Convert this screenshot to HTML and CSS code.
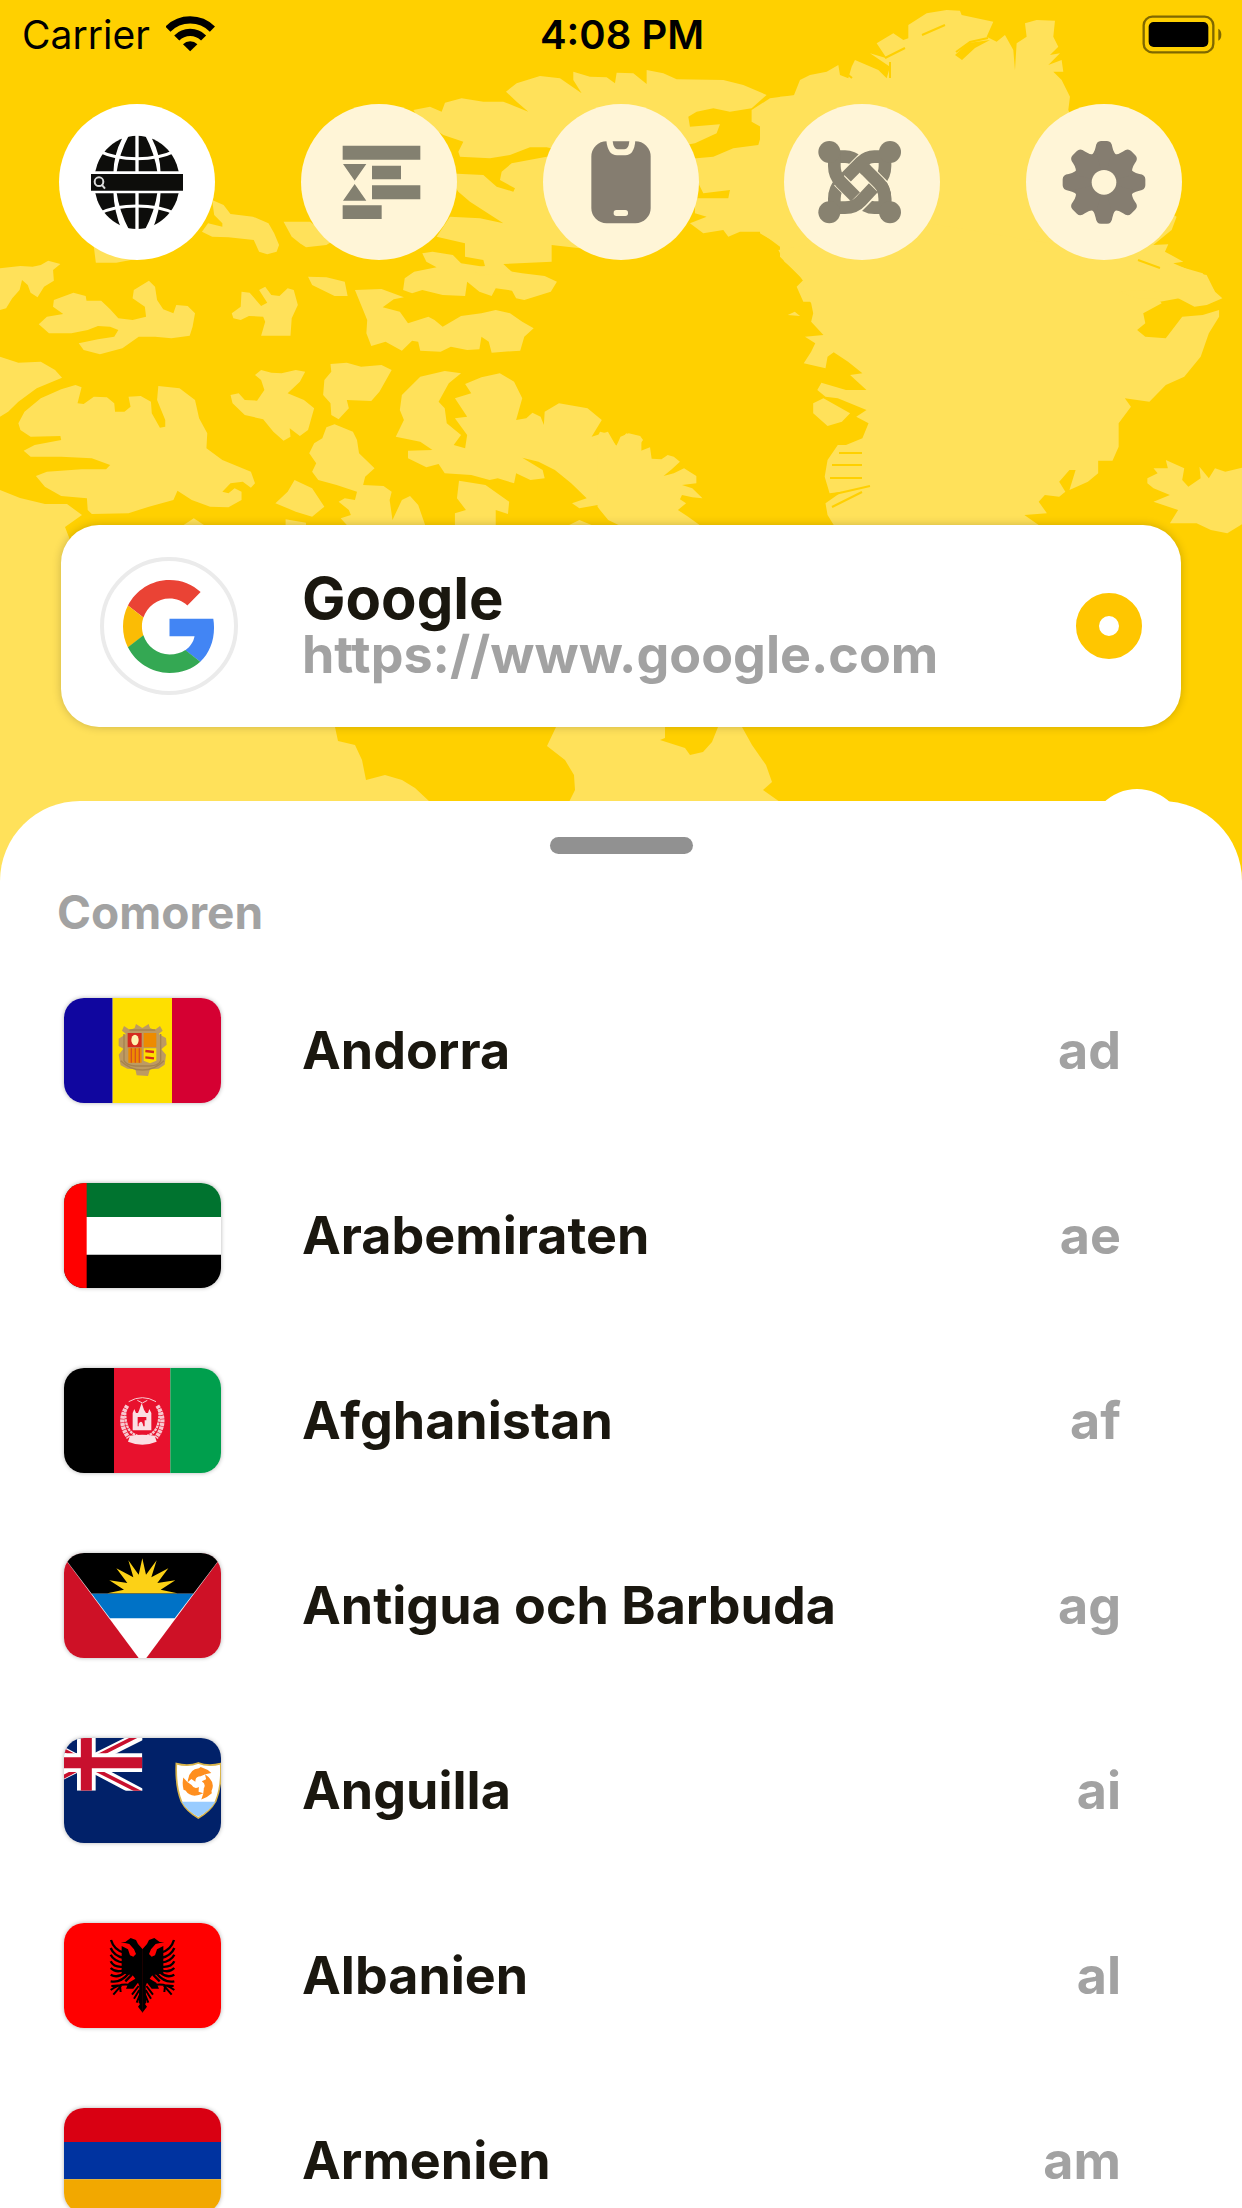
FILE: index.html
```html
<!DOCTYPE html>
<html lang="sv">
<head>
    <meta charset="UTF-8">
    <meta name="viewport" content="width=device-width, initial-scale=1">
    <title>Google</title>
    <link rel="stylesheet" href="styles.css">
</head>
<body>
<div class="app">

    <!-- Map background -->
    <svg class="map" viewBox="0 0 1242 900" aria-hidden="true">
        <g class="land">
            <!-- Canadian mainland -->
            <path d="M0 490L20 498 45 504 67 504 82 515 65 527 70 540 200 600 335 700 335 727 338 741 355 745 362 760 366 780 385 775 402 780 415 788 430 802V900H0Z"/>
            <path d="M556 700V727L547 746 565 760 574 775 575 790 569 802H780L763 790 772 782 766 765 752 745 742 727V700Z"/>
            <!-- Arctic islands -->
            <g transform="translate(0 190) scale(.408 .3333)">
                <path d="M0 235L50 228 80 230 100 225 118 212 148 222 130 240 132 272 108 290 92 322 75 308 68 285 54 270 48 300 30 325 15 355 0 360Z"/>
                <path d="M230 170L235 218 285 218 330 208 330 170Z"/>
                <path d="M520 30L548 45 565 72 620 80 658 100 672 130 684 165 678 185 655 193 635 185 622 150 560 142 520 140 495 125 510 100 545 110 545 100 525 75Z"/>
                <path d="M695 95L760 95 820 150 800 165 750 172 735 160 715 140Z"/>
                <path d="M95 403L115 380 155 372 130 350 132 330 180 308 210 318 212 332 248 332 270 358 290 385 325 390 358 380 355 350 325 325 328 300 365 272 380 290 385 330 400 358 425 370 432 345 460 348 478 370 472 410 465 437 420 445 380 440 340 440 300 475 245 493 205 480 193 460 240 448 280 440 290 420 270 410 240 408 215 420 175 430 120 430Z"/>
                <path d="M568 370L590 350 592 305 612 308 640 348 655 338 635 300 650 290 665 315 685 318 705 295 720 300 730 345 715 385 712 437 640 437 650 395 645 380 610 378 590 390 572 385Z"/>
                <path d="M755 260L800 262 845 275 852 318 820 318 790 300 765 285Z"/>
                <path d="M870 300L935 297 990 322 965 328 938 352 980 365 1000 400 1050 380 1065 390 1085 410 1130 378 1180 370 1215 360 1250 370 1280 395 1308 415 1285 440 1275 482 1205 488 1198 455 1180 440 1175 478 1145 480 1105 470 1080 485 1030 482 1025 455 1010 452 985 482 945 455 910 468 898 430 900 390 885 345Z"/>
                <path d="M988 300L992 265 1015 245 1070 232 1045 215 1035 190 1060 185 1110 195 1130 220 1185 230 1230 240 1280 250 1335 258 1365 275 1350 305 1285 330 1265 325 1255 302 1215 295 1205 318 1175 305 1145 275 1140 318 1085 315 1035 300 1010 310Z"/>
                <path d="M0 500L45 518 100 515 135 540 152 563 90 595 45 635 20 665 0 680Z"/>
                <path d="M45 700L60 665 100 625 150 598 185 585 200 592 190 640 205 642 230 620 262 622 280 640 282 665 305 665 320 650 315 620 345 618 370 635 372 670 392 713 405 710 405 690 385 630 388 588 440 595 478 630 488 685 508 730 506 775 545 810 615 845 625 880 615 893 595 875 565 880 545 905 560 910 575 895 592 905 592 930 560 952 515 950 470 930 435 902 425 930 365 950 315 970 225 972 215 960 213 925 150 918 110 890 88 858 115 845 200 838 260 838 270 825 225 805 150 800 75 800 58 782 85 765 150 750 148 738 75 740 50 720Z"/>
                <path d="M565 615L585 610 600 630 630 632 648 600 640 570 625 555 640 540 665 548 690 550 725 540 748 545 735 575 705 610 745 630 770 655 755 720 735 738 710 715 712 740 695 752 670 725 645 688 600 675 570 640Z"/>
                <path d="M810 522L850 518 885 530 935 525 960 540 930 605 910 633 850 630 855 655 830 688 812 675 810 640 792 615 795 570 812 545Z"/>
                <path d="M820 703L865 725 875 750 880 790 918 835 895 860 890 885 940 888 960 905 955 930 962 990 985 930 1005 918 1025 945 1042 1005 850 1005 835 985 860 975 855 960 830 935 845 925 870 930 875 905 825 885 780 870 765 845 775 820 758 790 770 760 790 745 800 712Z"/>
                <path d="M722 870L765 895 795 950 765 980 725 965 675 940 705 905Z"/>
                <path d="M450 1005L475 985 500 1005ZM700 1005V988L750 998V1005ZM1395 1005L1420 990 1450 1005Z"/>
                <path d="M1090 543L1130 550 1100 580 1075 635 1090 655 1095 700 1130 735 1112 765 1140 775 1145 735 1115 685 1145 680 1115 625 1155 610 1140 582 1180 562 1225 550 1260 575 1280 625 1265 690 1290 685 1305 668 1325 680 1333 705 1335 665 1370 640 1440 655 1475 690 1450 740 1490 725 1510 768 1535 730 1572 750V1005L1510 990 1465 945 1420 955 1402 940 1438 925 1400 880 1360 840 1320 815 1280 803 1330 840 1335 865 1300 870 1265 850 1260 880 1220 865 1200 870 1155 855 1090 850 1075 822 1045 832 1000 805 1000 782 1060 780 1030 755 970 740 990 690 980 660 985 615 1030 560Z"/>
                <path d="M1125 872L1190 885 1248 935 1245 972 1215 960 1215 1005 1115 1005 1115 970 1142 960 1120 925Z"/>
            </g>
            <!-- Ellesmere -->
            <g transform="translate(370 60) scale(.3333)">
                <path d="M130 150L180 140 215 155 225 128 275 115 340 125 400 125 475 155 440 125 408 95 440 70 510 48 570 55 635 100 610 60 610 35 660 50 710 52 735 70 740 38 790 40 830 72 830 30 880 40 920 58 1060 60 1120 75 1190 105 1145 145 1080 155 1030 145 980 155 955 170 960 200 1050 193 1040 220 975 250 700 300 530 262 480 262 420 285 360 295 270 290 265 275 280 245 220 225 150 180Z"/>
                <path d="M700 300L530 290 425 310 395 335 390 360 435 385 430 395 380 380 340 345 230 340 265 395 300 425 400 490 330 475 240 470 200 530 285 550 285 590 340 600 345 618 300 625 330 645 430 640 400 612 545 605 545 555 630 565 750 500Z"/>
                <path d="M900 300L980 295 1030 290 1090 265 1165 255 1180 205 1145 185 1145 150 1200 115 1275 105V560L1230 560 1170 515 1110 515 1075 530 1060 510 1000 520 960 490 1010 470 975 460 975 415 1075 415 1080 390 1000 400 985 370 900 370Z"/>
            </g>
            <!-- Greenland, north -->
            <path transform="translate(760) scale(.3333)" d="M0 330L60 290 100 290 120 240 150 225 200 215 235 195 240 225 265 235 275 200 285 180 320 195 355 210 380 235 390 200 330 160 380 175 350 130 400 100 430 120 445 115 445 75 500 40 560 30 600 32 605 45 700 65 680 110 710 125 735 105 760 150 765 210 770 130 800 110 795 70 830 60 885 62 880 110 895 140 870 165 900 160 865 195 905 180 910 215 880 215 905 240 930 290 925 330 1000 500 1250 650 1235 690 1180 735 1225 733 1215 755 1270 785 1240 790 1310 820 1340 825 1365 875 1200 905 130 905 110 860 130 840 60 770 60 735 0 700Z"/>
            <!-- Baffin east, Greenland south, Iceland -->
            <g transform="translate(600 190) scale(.41 .3333)">
                <path d="M-6 740L0 725 15 730 40 768 50 740 70 730 98 738 105 750 88 778 100 782 122 772 126 806 150 808 165 795 180 800 195 815 175 838 155 858 180 850 205 835 235 858 235 880 200 885 225 895 250 925 225 922 200 915 195 928 210 940 190 960 215 980 243 1005 45 1005 20 990 0 960 -6 950Z"/>
                <path d="M435 180L450 215 480 245 497 275 495 300 515 340 520 370 515 395 545 435 500 440 525 460 515 485 497 520 550 535 555 500 570 487 605 515 640 550 610 555 650 600 600 600 540 578 530 600 550 620 580 625 650 660 625 680 655 700 640 745 600 765 580 765 555 810 548 860 560 910 590 905 550 940 555 975 570 1005 1070 1005 1035 975 1090 970 1070 935 1085 915 1120 920 1135 905 1120 875 1145 840 1160 840 1145 900 1190 875 1215 850 1215 812 1250 812 1265 770 1265 700 1295 650 1280 625 1340 635 1380 585 1425 560 1465 500 1485 430 1510 380 1510 360 1470 375 1420 380 1380 445 1330 440 1310 420 1330 400 1325 370 1370 340 1360 325 1310 325 1265 305 1310 300 1380 305 1450 350 1480 345 1518 325 1500 305 1470 250 1400 225 1300 200 800 100Z"/>
                <path d="M520 640L545 625 610 670 590 695 555 708 520 670ZM458 375L475 365 488 378Z"/>
                <path d="M1335 865L1360 850 1350 835 1385 835 1380 810 1425 835 1420 870 1435 890 1465 865 1462 830 1485 865 1500 835 1525 845 1570 832V1000L1530 1030 1490 1020 1455 1000 1390 1000 1410 960 1350 935 1390 915 1350 895 1335 880Z"/>
            </g>
        </g>
        <!-- Fjords -->
        <g class="fjord">
            <path d="M839 453H862M832 465H862M830 478H862M835 494L870 486M832 507L862 492M1138 260L1160 268"/>
            <path d="M956 52L970 42 988 38M922 35L945 25M885 58L905 48M842 70L852 78M890 62V78"/>
        </g>
        <path class="sea" d="M665 700V738L660 740 685 748 690 755 703 752 712 742 718 727V700ZM955 55L968 43 990 40 975 48 962 60Z"/>
    </svg>

    <header class="status-bar">
        <div class="carrier">
            <span>Carrier</span>
            <svg class="wifi" viewBox="495 45 148 110" aria-hidden="true">
                <path d="M500 85A96 96 0 0 1 636 85M527 112A58 58 0 0 1 609 112" fill="none" stroke="#000" stroke-width="22"/>
                <path d="M568 153L546 131A31 31 0 0 1 590 131Z"/>
            </svg>
        </div>
        <time class="clock">4:08 PM</time>
        <div class="power">
            <svg class="battery" viewBox="1150 38 240 117" aria-hidden="true">
                <rect x="1155" y="43" width="209" height="107" rx="26" fill="none" stroke="#000" stroke-opacity=".5" stroke-width="7"/>
                <rect x="1170" y="59" width="179" height="75" rx="15"/>
                <path d="M1379 79Q1388 84 1388 97T1379 115Z" fill-opacity=".5"/>
            </svg>
        </div>
    </header>

    <nav class="tabs">
        <button class="tab active" aria-label="Domains">
            <svg viewBox="178 311 468 468">
                <ellipse cx="412" cy="546" rx="129" ry="140" fill="#0d0d0b"/>
                <g fill="none" stroke="#fff" stroke-width="9">
                    <path d="M412 400V690" stroke-width="10"/>
                    <path d="M300 453Q345 475 412 475T524 453M300 639Q345 617 412 617T524 639"/>
                </g>
                <path id="meridian" fill="#fff" d="M367 400H390Q358 460 350 520V572Q358 632 390 692H367Q342 630 341 572V520Q342 462 367 415Z"/>
                <use href="#meridian" transform="matrix(-1 0 0 1 824 0)"/>
                <path fill="#fff" d="M265 513H560V579H265Z"/>
                <path fill="#0d0d0b" d="M274 521H550V571H274Z"/>
                <g fill="none" stroke="#ddd" stroke-width="6"><circle cx="298" cy="544" r="13"/><path d="M306 553L316 565"/></g>
            </svg>
        </button>
        <button class="tab" aria-label="Timeline">
            <svg viewBox="902 311 468 468" fill="#838070">
                <path d="M1027 436H1260V478H1027ZM1115 496H1202V537H1115ZM1115 555H1260V597H1115ZM1027 615H1144V656H1027ZM1028 491H1098L1063 541ZM1063 551L1098 601H1028Z"/>
            </svg>
        </button>
        <button class="tab" aria-label="Phone">
            <svg viewBox="518 131 468 468">
                <rect x="663" y="243" width="178" height="246" rx="46" fill="#857d70"/>
                <path d="M708 240Q712 285 740 285H765Q792 285 795 240Z" fill="#fff5d7"/>
                <path d="M727 243H777Q775 267 762 267H742Q730 267 727 243Z" fill="#857d70"/>
                <rect x="730" y="449" width="43" height="18" rx="8" fill="#fff5d7"/>
            </svg>
        </button>
        <button class="tab" aria-label="Joomla">
            <svg viewBox="72 311 468 468">
                <g fill="none" stroke="#888270" stroke-width="38">
                    <path d="M208 469H255Q278 469 295 486L356 547Q375 566 375 595V636"/>
                    <path d="M325 464L252 537" stroke="#fff5d7" stroke-width="44"/>
                    <path d="M390 469H343Q320 469 303 486L242 547Q223 566 223 595V636"/>
                    <path d="M238 540L288 590" stroke="#fff5d7" stroke-width="44"/>
                    <path d="M223 455V497Q223 525 242 545L295 598Q315 622 343 622H390"/>
                    <path d="M283 624L336 571" stroke="#fff5d7" stroke-width="44"/>
                    <path d="M375 455V497Q375 525 356 545L303 602Q285 622 255 622H208"/>
                    <path d="M318 509L367 558" stroke="#fff5d7" stroke-width="44"/>
                    <path d="M295 486L356 547Q375 566 375 595V636"/>
                </g>
                <g fill="#888270">
                    <circle cx="208" cy="455" r="33"/><circle cx="390" cy="455" r="33"/>
                    <circle cx="208" cy="636" r="33"/><circle cx="390" cy="636" r="33"/>
                </g>
            </svg>
        </button>
        <button class="tab" aria-label="Settings">
            <svg viewBox="797 311 468 468" fill="#857d70">
                <circle cx="1031" cy="546" r="88"/>
                <g id="teeth">
                    <path id="tooth" d="M986 470Q1002 462 1006 440Q1008 422 1022 422H1040Q1054 422 1056 440Q1060 462 1076 470L1031 546ZM986 622Q1002 630 1006 652Q1008 670 1022 670H1040Q1054 670 1056 652Q1060 630 1076 622L1031 546Z"/>
                    <use href="#tooth" transform="rotate(90 1031 546)"/>
                </g>
                <use href="#teeth" transform="rotate(45 1031 546)"/>
                <circle cx="1031" cy="546" r="37" fill="#fff5d7"/>
            </svg>
        </button>
    </nav>

    <label class="card" for="engine">
        <span class="logo">
            <svg viewBox="0 0 48 48" aria-hidden="true">
                <path fill="#ea4335" d="M24 9.5c3.54 0 6.71 1.22 9.21 3.6l6.85-6.85C35.9 2.38 30.47 0 24 0 14.62 0 6.51 5.38 2.56 13.22l7.98 6.19C12.43 13.72 17.74 9.5 24 9.5z"/>
                <path fill="#4285f4" d="M46.98 24.55c0-1.57-.15-3.09-.38-4.55H24v9.02h12.94c-.58 2.96-2.26 5.48-4.78 7.18l7.73 6c4.51-4.18 7.09-10.36 7.09-17.65z"/>
                <path fill="#fbbc05" d="M10.53 28.59c-.48-1.45-.76-2.99-.76-4.59s.27-3.14.76-4.59l-7.98-6.19C.92 16.46 0 20.12 0 24c0 3.88.92 7.54 2.56 10.78l7.97-6.19z"/>
                <path fill="#34a853" d="M24 48c6.48 0 11.93-2.13 15.89-5.81l-7.73-6c-2.15 1.45-4.92 2.3-8.16 2.3-6.26 0-11.57-4.22-13.47-9.91l-7.98 6.19C6.51 42.62 14.62 48 24 48z"/>
            </svg>
        </span>
        <span class="card-text">
            <strong>Google</strong>
            <span>https://www.google.com</span>
        </span>
        <input type="radio" id="engine" name="engine" checked>
    </label>

    <main class="sheet">
        <div class="bump"></div>
        <div class="handle"></div>
        <h2>Comoren</h2>
        <ul class="countries">
            <li>
                <svg class="flag" viewBox="42 52 471 315">
                    <path fill="#10069f" d="M42 52H188V367H42Z"/>
                    <path fill="#fedf00" d="M188 52H366V367H188Z"/>
                    <path fill="#d50032" d="M366 52H513V367H366Z"/>
                    <path fill="#bd9a62" d="M277 142L258 130 254 142 240 148 222 136 216 150 228 160 206 174 206 196 220 204 206 222 212 254 232 264 256 266 260 284 294 286 300 266 326 264 344 252 348 222 334 206 350 192 348 172 326 160 338 150 330 136 314 148 300 142 296 130Z"/>
                    <path fill="none" stroke="#a5834f" stroke-width="4" d="M222 160V240Q230 254 256 256H300Q326 254 332 240V160M238 148H316M212 240Q240 268 277 268T342 240"/>
                    <path fill="#d52b1e" d="M233 157H275V200H233Z"/>
                    <path fill="#ed8b00" d="M281 157H319V200H281ZM235 203H275V246H235Z"/>
                    <path fill="#fedf00" d="M281 203H319V240L300 248 281 240Z"/>
                    <ellipse cx="255" cy="178" rx="11" ry="16" fill="#fff3b0"/>
                    <path stroke="#d8501f" stroke-width="4" d="M244 203V246M256 203V246M268 203V246"/>
                    <path stroke="#d52b1e" stroke-width="7" d="M286 211L312 214M286 230L312 233"/>
                </svg>
                <span class="name">Andorra</span><span class="code">ad</span>
            </li>
            <li>
                <svg class="flag" viewBox="42 606 471 315">
                    <path fill="#fff" d="M42 606H513V921H42Z"/>
                    <path fill="#00732f" d="M42 606H513V708H42Z"/>
                    <path d="M42 821H513V921H42Z"/>
                    <path fill="#f00" d="M42 606H110V921H42Z"/>
                </svg>
                <span class="name">Arabemiraten</span><span class="code">ae</span>
            </li>
            <li>
                <svg class="flag" viewBox="42 53 471 315">
                    <path d="M42 53H192V368H42Z"/>
                    <path fill="#e8112d" d="M192 53H361V368H192Z"/>
                    <path fill="#009f4d" d="M361 53H513V368H361Z"/>
                    <g fill="none" stroke="#f8c9d0">
                        <path stroke-width="13" stroke-dasharray="9 2" d="M232 166Q200 214 236 262M322 166Q354 214 318 262"/>
                        <path stroke-width="7" stroke-dasharray="8 2" d="M226 176Q222 245 262 256M328 176Q332 245 292 256"/>
                        <path stroke-width="3" d="M236 154Q277 130 318 154M262 150L277 158 292 150"/>
                    </g>
                    <path fill="#fbdfe3" d="M248 240V188L253 176 258 188H264L268 178 275 158 282 178 288 188H294L298 176 304 188V240ZM240 256Q277 250 314 256L320 274Q277 292 234 274Z"/>
                    <path fill="#e8112d" d="M263 200H289V210H284V228H280Q276 206 266 220V228H263Z"/>
                </svg>
                <span class="name">Afghanistan</span><span class="code">af</span>
            </li>
            <li>
                <svg class="flag" viewBox="42 608 471 315">
                    <path fill="#ce1126" d="M42 608H513V923H42Z"/>
                    <path fill="#fff" d="M32 608H523L289 923H266Z"/>
                    <path d="M32 608H523L430 730H125Z"/>
                    <path fill="#0072c6" d="M125 730H430L374 804H180Z"/>
                    <path fill="#fcd116" d="M172 729L222 718 178 690 232 698 199 654 250 681 235 630 266 673 277 624 288 673 320 630 304 681 355 654 322 698 376 690 332 718 382 729Z"/>
                </svg>
                <span class="name">Antigua och Barbuda</span><span class="code">ag</span>
            </li>
            <li>
                <svg class="flag" viewBox="42 55 471 315">
                    <path fill="#012169" d="M42 55H513V370H42Z"/>
                    <svg x="0" y="55" width="277" height="158" viewBox="0 55 277 158">
                        <path stroke="#fff" stroke-width="30" d="M-59 45L277 223M-59 213L277 45"/>
                        <path stroke="#c8102e" stroke-width="11" d="M109 136L277 221M109 126L277 41M109 136L-40 214M109 126L-40 50"/>
                        <path stroke="#fff" stroke-width="56" d="M0 129H277M109 55V213"/>
                        <path stroke="#c8102e" stroke-width="33" d="M0 129H277M109 55V213"/>
                    </svg>
                    <path fill="#fff" stroke="#d9b44a" stroke-width="5" d="M379 132Q415 142 445 130Q475 142 512 132Q516 200 497 245Q480 275 445 295Q410 275 394 245Q376 200 379 132Z"/>
                    <path fill="#9cf" d="M395 246H496Q478 274 445 291Q412 274 395 246Z"/>
                    <g fill="#ff8f1f">
                        <path id="dolphin" d="M413 188Q416 148 447 146L452 142Q472 148 484 160Q464 162 452 170Q436 170 436 186L424 178Z"/>
                        <use href="#dolphin" transform="rotate(120 446 191)"/>
                        <use href="#dolphin" transform="rotate(240 446 191)"/>
                    </g>
                </svg>
                <span class="name">Anguilla</span><span class="code">ai</span>
            </li>
            <li>
                <svg class="flag" viewBox="42 611 471 315">
                    <path fill="#f00" d="M42 611H513V926H42Z"/>
                    <g id="eagle">
                        <path d="M278 690L264 674 258 662 242 656 226 668 212 668 238 674 252 690 258 704 250 712 240 708 234 690 215 680V762L248 768 256 778 236 790 228 808 250 808 264 790 268 800 266 850 270 854 264 862 278 880Z"/>
                        <path fill="none" stroke="#000" stroke-width="7" d="M222 700Q192 692 183 662M222 716Q192 710 182 686M222 730Q192 726 182 706M222 742Q192 746 182 726M222 752Q198 762 182 746M224 760Q202 778 182 766M236 762Q212 792 182 786M246 766L226 786"/>
                        <path fill="none" stroke="#000" stroke-width="6" d="M236 796Q208 792 182 812M212 798L184 800M214 798L190 826M210 800L212 818M266 800L246 826M268 812L252 838M270 826L260 850"/>
                    </g>
                    <use href="#eagle" transform="matrix(-1 0 0 1 555 0)"/>
                </svg>
                <span class="name">Albanien</span><span class="code">al</span>
            </li>
            <li>
                <svg class="flag" viewBox="0 0 471 315">
                    <path fill="#d90012" d="M0 0H471V105H0Z"/>
                    <path fill="#0033a0" d="M0 102H471V214H0Z"/>
                    <path fill="#f2a800" d="M0 214H471V315H0Z"/>
                </svg>
                <span class="name">Armenien</span><span class="code">am</span>
            </li>
        </ul>
    </main>
</div>
</body>
</html>
```
FILE: styles.css
```css
:root {
    --yellow: #ffd000;
    --land: #ffe15a;
    --cream: #fff5d7;
    --text: #1a170f;
    --muted: #a2a2a2;
}

* {
    box-sizing: border-box;
}

body {
    margin: 0;
    font-family: Inter, "Liberation Sans", sans-serif;
    color: var(--text);
    background: var(--yellow);
}

.app {
    position: relative;
    display: flex;
    flex-direction: column;
    height: 100vh;
    overflow: hidden;
}

.map {
    position: absolute;
    top: 0;
    left: 0;
    width: 100%;
    z-index: -1;
}

.land {
    fill: var(--land);
}

.sea {
    fill: var(--yellow);
}

.fjord {
    fill: none;
    stroke: var(--yellow);
    stroke-width: 2;
}

/* status bar */
.status-bar {
    display: flex;
    align-items: center;
    height: 68px;
    padding: 0 20px 0 22px;
    font-size: 39px;
    color: #000;
}

.carrier,
.power {
    display: flex;
    flex: 1;
    align-items: center;
    gap: 16px;
}

.power {
    justify-content: flex-end;
}

.clock {
    font-size: 40px;
    font-weight: 600;
}

.wifi {
    width: 49px;
    height: 36px;
}

.battery {
    width: 80px;
    height: 39px;
}

/* round buttons */
.tabs {
    display: flex;
    justify-content: space-between;
    padding: 36px 60px 0 59px;
}

.tab {
    width: 156px;
    height: 156px;
    padding: 0;
    border: none;
    border-radius: 50%;
    background: var(--cream);
    cursor: pointer;
}

.tab.active {
    background: #fff;
}

.tab svg {
    display: block;
    width: 100%;
}

/* selected search engine */
.card {
    display: flex;
    align-items: center;
    height: 202px;
    margin: 265px 61px 74px;
    padding: 0 39px;
    border-radius: 38px;
    background: #fff;
    box-shadow: 0 0 10px rgba(0, 0, 0, 0.2);
}

.logo {
    display: flex;
    align-items: center;
    justify-content: center;
    width: 138px;
    height: 138px;
    border: 4px solid #ebebeb;
    border-radius: 50%;
}

.logo svg {
    width: 93px;
}

.card-text {
    display: flex;
    flex: 1;
    flex-direction: column;
    margin-left: 64px;
    font-size: 52px;
    line-height: 56px;
    font-weight: 700;
    color: var(--muted);
}

.card-text strong {
    font-size: 58px;
    line-height: 58px;
    font-weight: 700;
    color: var(--text);
}

.card input {
    appearance: none;
    width: 66px;
    height: 66px;
    margin: 0;
    border: 23px solid #ffc600;
    border-radius: 50%;
}

/* bottom sheet */
.sheet {
    position: relative;
    flex: 1;
    min-height: 0;
    padding-top: 36px;
    border-radius: 80px 80px 0 0;
    background: #fff;
}

.bump {
    position: absolute;
    top: -12px;
    right: 57px;
    width: 96px;
    height: 96px;
    border-radius: 50%;
    background: #fff;
}

.handle {
    width: 143px;
    height: 17px;
    margin: 0 auto;
    border-radius: 9px;
    background: #919191;
}

.sheet h2 {
    margin: 28px 57px 16px;
    font-size: 46px;
    line-height: 60px;
    font-weight: 700;
    color: var(--muted);
}

.countries {
    margin: 0;
    padding: 0 121px 0 64px;
    list-style: none;
    font-size: 52px;
    font-weight: 700;
}

.countries li {
    display: flex;
    align-items: center;
    height: 185px;
}

.flag {
    width: 157px;
    height: 105px;
    border-radius: 20px;
    box-shadow: 0 0 4px rgba(0, 0, 0, 0.3);
}

.name {
    flex: 1;
    margin-left: 81px;
}

.code {
    color: var(--muted);
}
```
